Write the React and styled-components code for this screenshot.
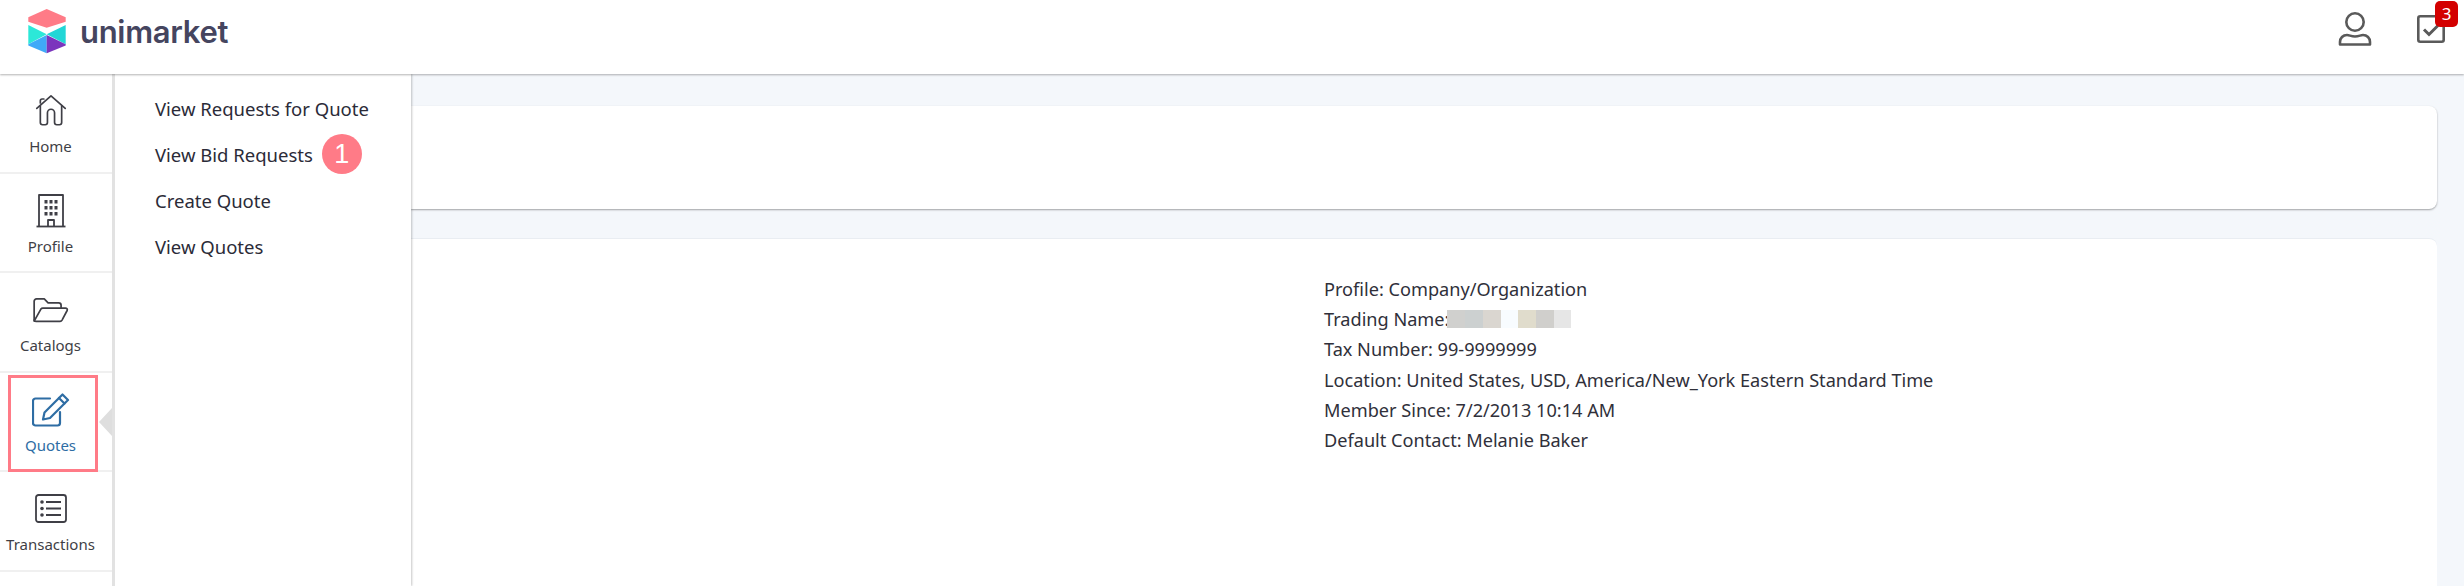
import React from 'react';
import styled, { createGlobalStyle } from 'styled-components';

const Global = createGlobalStyle`
  html, body {
    margin: 0;
    padding: 0;
    height: 100%;
    overflow: hidden;
    background: #fff;
    font-family: 'Noto Sans', 'Open Sans', sans-serif;
  }
  * { box-sizing: border-box; }
`;

const Page = styled.div`
  width: 2464px;
  height: 586px;
  display: flex;
  flex-direction: column;
  overflow: hidden;
`;

const Header = styled.header`
  height: 74px;
  flex: none;
  display: flex;
  align-items: flex-start;
  justify-content: space-between;
  padding-left: 28px;
  background: #fff;
  position: relative;
  z-index: 3;
  box-shadow: 0 1px 2px rgba(0, 0, 0, 0.3);
`;

const Brand = styled.div`
  display: flex;
  align-items: center;
  gap: 14px;
  padding-top: 9px;
`;

const BrandName = styled.span`
  font-family: 'Inter', sans-serif;
  font-size: 31px;
  line-height: 44px;
  font-weight: 600;
  letter-spacing: -0.3px;
  color: #45455f;
`;

const HeaderTools = styled.div`
  display: flex;
  align-items: flex-start;
`;

const ToolButton = styled.div`
  position: relative;
  margin-top: ${(p) => p.$top}px;
  margin-right: ${(p) => p.$right}px;
  height: 34px;
`;

const Badge = styled.span`
  position: absolute;
  left: 18px;
  top: -14px;
  width: 23px;
  height: 26px;
  border-radius: 5px;
  background: #d30000;
  color: #fff;
  font-size: 17px;
  line-height: 26px;
  text-align: center;
`;

const Body = styled.div`
  flex: 1;
  min-height: 0;
  display: flex;
`;

const Sidebar = styled.nav`
  width: 115px;
  flex: none;
  background: #fff;
  border-right: 3px solid #e2e2e2;
  position: relative;
  z-index: 2;
`;

const SideItem = styled.div`
  height: 99.5px;
  padding: 18px 11px 0 0;
  display: flex;
  flex-direction: column;
  align-items: center;
  gap: 8px;
  border-bottom: 2px solid #f0f0f0;
  position: relative;
  color: ${(p) => (p.$active ? '#2e6da4' : '#3f3f46')};
`;

const Highlight = styled.span`
  position: absolute;
  left: 8px;
  top: 2px;
  width: 90px;
  height: 97px;
  border: 3px solid #ff7b87;
`;

const Pointer = styled.span`
  position: absolute;
  right: 0;
  top: 35px;
  width: 0;
  height: 0;
  border-top: 14px solid transparent;
  border-bottom: 14px solid transparent;
  border-right: 13px solid #dedede;
`;

const IconBox = styled.span`
  width: 40px;
  height: 36px;
  padding-top: 2px;
  display: flex;
  align-items: center;
  justify-content: center;
  flex: none;
`;

const SideLabel = styled.span`
  font-size: 15px;
  line-height: 20px;
  white-space: nowrap;
`;

const Flyout = styled.div`
  width: 296px;
  flex: none;
  background: #fff;
  padding: 11px 0 0 40px;
  position: relative;
  z-index: 1;
  box-shadow: 1px 0 2px rgba(0, 0, 0, 0.22);
`;

const FlyRow = styled.div`
  height: 46px;
  display: flex;
  align-items: center;
  font-size: 18.5px;
  color: #2b2b38;
  white-space: nowrap;
`;

const StepDot = styled.span`
  width: 40px;
  height: 40px;
  margin-left: 9px;
  border-radius: 50%;
  background: #ff7b87;
  color: #fff;
  font-family: 'Liberation Sans', sans-serif;
  font-size: 27px;
  line-height: 40px;
  text-align: center;
`;

const Main = styled.main`
  flex: 1;
  min-width: 0;
  background: #f4f7fb;
  padding: 32px 27px 0 0;
  display: flex;
  flex-direction: column;
  gap: 29px;
`;

const TopCard = styled.section`
  height: 103px;
  flex: none;
  background: #fff;
  border-radius: 0 8px 8px 0;
  box-shadow: 0 1px 2px rgba(0, 0, 0, 0.35);
`;

const DetailCard = styled.section`
  flex: 1;
  background: #fff;
  border-radius: 0 8px 0 0;
  border-top: 1px solid #e9edf2;
  padding: 35px 0 0 913px;
`;

const DetailLine = styled.div`
  height: 30.2px;
  display: flex;
  align-items: center;
  font-size: 18.15px;
  color: #30303a;
  white-space: nowrap;
`;

const BlurredName = styled.span`
  display: flex;
  margin-left: -2px;
`;

const Pixel = styled.span`
  width: 17.7px;
  height: 18px;
  flex: none;
  background: ${(p) => p.$color};
`;

const Logo = () => (
  <svg width="38" height="45" viewBox="0 0 38 45">
    <polygon points="0.300,8.300 18.700,0 37.700,8.300 37.700,12.700 18.700,18.700 0.300,12.700" fill="#ff7b87" />
    <polygon points="0.300,16 18.700,25.300 0.300,35.300" fill="#2ce8d8" />
    <polygon points="37.700,16 18.700,25.300 37.700,35.300" fill="#22d6d6" />
    <polygon points="0.300,35.300 18.700,26 18.700,44.300 0.300,36.500" fill="#3fa9f8" />
    <polygon points="37.700,35.300 18.700,26 18.700,44.300 37.700,36.500" fill="#7b35bd" />
  </svg>
);

const stroke = { fill: 'none', stroke: 'currentColor', strokeLinecap: 'round', strokeLinejoin: 'round' };

const HomeIcon = () => (
  <svg width="32" height="34" viewBox="0 0 36 36" {...stroke} strokeWidth="1.900">
    <path d="M2 15 18 1l16 14" />
    <path d="M6 12v19a2.500 2.500 0 0 0 2.500 2.500h3a2.500 2.500 0 0 0 2.500-2.500V20a4 4 0 0 1 8 0v11a2.500 2.500 0 0 0 2.500 2.500h3a2.500 2.500 0 0 0 2.500-2.500V12" />
    <path d="M6 9V6.500a2 2 0 0 1 2-2h2" />
  </svg>
);

const BuildingIcon = () => (
  <svg width="30" height="34" viewBox="0 0 30 34" {...stroke} strokeWidth="1.8" strokeLinecap="butt">
    <path d="M0.500 32.500h29" />
    <path d="M3 32.500V1h24v31.500" />
    <path d="M12 32.500V26h6v6.500" />
    <g fill="currentColor" stroke="none">
      <rect x="8.500" y="6" width="3" height="3.500" />
      <rect x="13.500" y="6" width="3" height="3.500" />
      <rect x="18.500" y="6" width="3" height="3.500" />
      <rect x="8.500" y="12" width="3" height="3.500" />
      <rect x="13.500" y="12" width="3" height="3.500" />
      <rect x="18.500" y="12" width="3" height="3.500" />
      <rect x="8.500" y="18" width="3" height="3.500" />
      <rect x="13.500" y="18" width="3" height="3.500" />
      <rect x="18.500" y="18" width="3" height="3.500" />
    </g>
  </svg>
);

const FolderIcon = () => (
  <svg width="37" height="25" viewBox="0 0 38 26" {...stroke} strokeWidth="1.8">
    <path d="M2 23V3.500A2.500 2.500 0 0 1 4.500 1h8l4 4h11A2.500 2.500 0 0 1 30 7.500V10" />
    <path d="M2 24 9 11.500a2.500 2.500 0 0 1 2-1h23.500c1.500 0 2.400 1.300 1.800 2.500L31 23a2.500 2.500 0 0 1-2 1.200H4C2.800 24.200 2 23.500 2 23z" />
  </svg>
);

const EditIcon = () => (
  <svg width="38" height="34" viewBox="0 0 38 34" {...stroke} strokeWidth="2.200">
    <path d="M28 19v11a2.500 2.500 0 0 1-2.500 2.500h-22A2.500 2.500 0 0 1 1 30V8a2.500 2.500 0 0 1 2.500-2.500H18" />
    <path d="M30.500 1.500 36 7 18 25l-7 1.500L12.500 19.500z" />
    <path d="M27 5l5.500 5.500" />
  </svg>
);

const ListIcon = () => (
  <svg width="32" height="30" viewBox="0 0 32 30" {...stroke} strokeWidth="1.800">
    <rect x="1" y="1" width="30" height="27" rx="2.500" />
    <path d="M11 8h15M11 14.500h15M11 21h15" strokeWidth="2" strokeLinecap="butt" />
    <g fill="currentColor" stroke="none">
      <circle cx="7" cy="8" r="1.800" />
      <circle cx="7" cy="14.500" r="1.800" />
      <circle cx="7" cy="21" r="1.800" />
    </g>
  </svg>
);

const UserIcon = () => (
  <svg width="34" height="34" viewBox="0 0 34 34" fill="none" stroke="#5a5a5a" strokeWidth="2.600" strokeLinejoin="round">
    <circle cx="17" cy="10" r="8.700" />
    <path d="M2 32.500v-2.500c0-4 3-7 7-7 2.500 0 4 1.500 8 1.500s5.500-1.500 8-1.500c4 0 7 3 7 7v2.500z" />
  </svg>
);

const CheckIcon = () => (
  <svg width="28" height="28" viewBox="0 0 28 28" fill="none" stroke="#5a5a5a" strokeWidth="2.600">
    <rect x="1.300" y="1.300" width="25.400" height="25.400" rx="2" />
    <path d="M7 14.500l5 5 9-9" strokeWidth="3" />
  </svg>
);

const sideItems = [
  { label: 'Home', icon: <HomeIcon /> },
  { label: 'Profile', icon: <BuildingIcon /> },
  { label: 'Catalogs', icon: <FolderIcon /> },
  { label: 'Quotes', icon: <EditIcon />, active: true },
  { label: 'Transactions', icon: <ListIcon /> },
];

const blur = ['#d0d0ce', '#ccd0d0', '#dad6d0', '#f8fcff', '#e0dccc', '#d0cfcc', '#e6e6e6'];

export default function App() {
  return (
    <Page>
      <Global />
      <Header>
        <Brand>
          <Logo />
          <BrandName>unimarket</BrandName>
        </Brand>
        <HeaderTools>
          <ToolButton $top={12} $right={45}>
            <UserIcon />
          </ToolButton>
          <ToolButton $top={15} $right={19}>
            <CheckIcon />
            <Badge>3</Badge>
          </ToolButton>
        </HeaderTools>
      </Header>
      <Body>
        <Sidebar>
          {sideItems.map((item) => (
            <SideItem key={item.label} $active={item.active}>
              <IconBox>{item.icon}</IconBox>
              <SideLabel>{item.label}</SideLabel>
              {item.active && <Highlight />}
              {item.active && <Pointer />}
            </SideItem>
          ))}
        </Sidebar>
        <Flyout>
          <FlyRow>View Requests for Quote</FlyRow>
          <FlyRow>
            View Bid Requests
            <StepDot>1</StepDot>
          </FlyRow>
          <FlyRow>Create Quote</FlyRow>
          <FlyRow>View Quotes</FlyRow>
        </Flyout>
        <Main>
          <TopCard />
          <DetailCard>
            <DetailLine>Profile: Company/Organization</DetailLine>
            <DetailLine>
              Trading Name:
              <BlurredName>
                {blur.map((c, i) => (
                  <Pixel key={i} $color={c} />
                ))}
              </BlurredName>
            </DetailLine>
            <DetailLine>Tax Number: 99-9999999</DetailLine>
            <DetailLine>Location: United States, USD, America/New_York Eastern Standard Time</DetailLine>
            <DetailLine>Member Since: 7/2/2013 10:14 AM</DetailLine>
            <DetailLine>Default Contact: Melanie Baker</DetailLine>
          </DetailCard>
        </Main>
      </Body>
    </Page>
  );
}
